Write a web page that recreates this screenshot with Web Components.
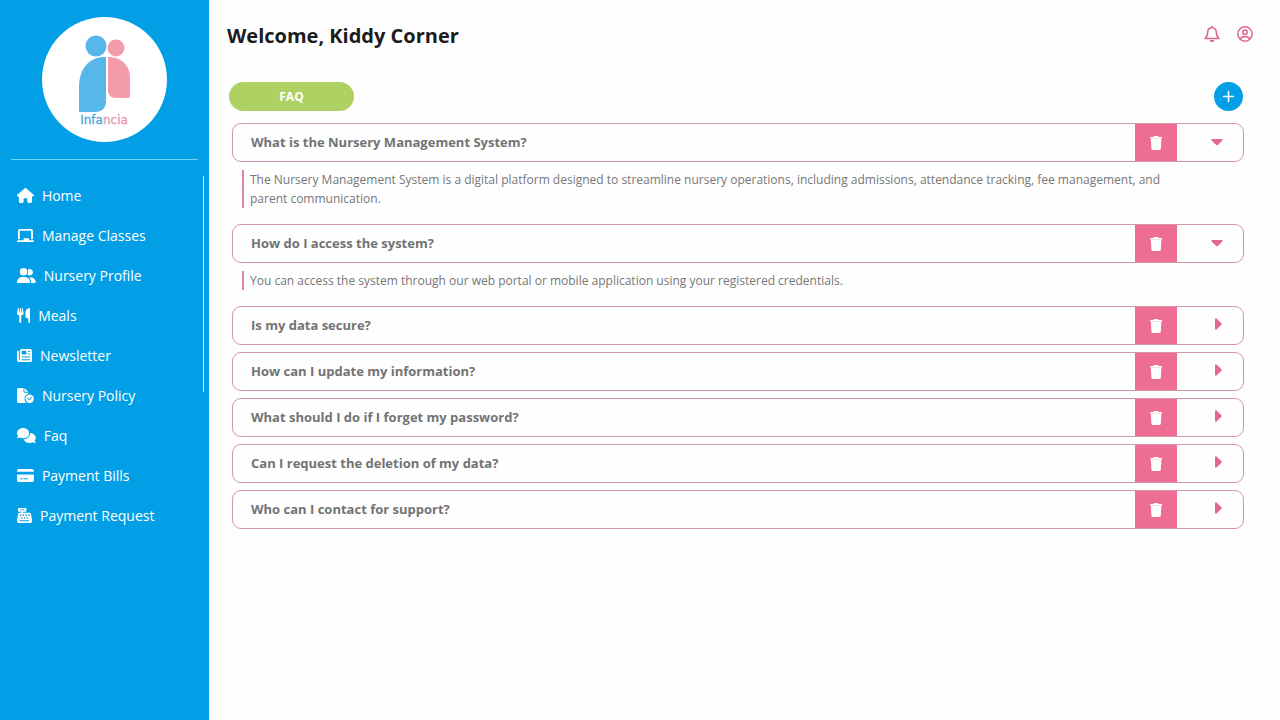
<!DOCTYPE html>
<html lang="en">
<head>
<meta charset="utf-8">
<meta name="viewport" content="width=device-width, initial-scale=1">
<title>Infancia - FAQ</title>
<style>
  html, body {
    margin: 0;
    min-height: 100%;
  }

  body {
    font-family: "Open Sans", "Noto Sans", sans-serif;
    background: #fefefe;
    color: #1c1c1c;
  }
</style>
</head>
<body>
<infancia-app>
  <infancia-sidebar slot="sidebar">
    <nav-link icon="house" href="#home">Home</nav-link>
    <nav-link icon="board" href="#classes">Manage Classes</nav-link>
    <nav-link icon="users" href="#profile">Nursery Profile</nav-link>
    <nav-link icon="utensils" href="#meals">Meals</nav-link>
    <nav-link icon="newspaper" href="#newsletter">Newsletter</nav-link>
    <nav-link icon="policy" href="#policy">Nursery Policy</nav-link>
    <nav-link icon="comments" href="#faq">Faq</nav-link>
    <nav-link icon="card" href="#bills">Payment Bills</nav-link>
    <nav-link icon="register" href="#request">Payment Request</nav-link>
  </infancia-sidebar>
  <page-header>Welcome, Kiddy Corner</page-header>
  <faq-list heading="FAQ">
    <faq-item open question="What is the Nursery Management System?">The Nursery Management System is a digital platform designed to streamline nursery operations, including admissions, attendance tracking, fee management, and parent communication.</faq-item>
    <faq-item open question="How do I access the system?">You can access the system through our web portal or mobile application using your registered credentials.</faq-item>
    <faq-item question="Is my data secure?"></faq-item>
    <faq-item question="How can I update my information?"></faq-item>
    <faq-item question="What should I do if I forget my password?"></faq-item>
    <faq-item question="Can I request the deletion of my data?"></faq-item>
    <faq-item question="Who can I contact for support?"></faq-item>
  </faq-list>
</infancia-app>

<script>
"use strict";

(() => {
  // name: [viewBox width, viewBox height, markup]
  const ICONS = {
    house: [576, 512, `<path d="M575.8 255.5c0 18-15 32.1-32 32.1l-32 0 .7 160.2c0 2.7-.2 5.4-.5 8.1l0 16.2c0 22.1-17.9 40-40 40l-80 0c-22.1 0-40-17.9-40-40l0-88c0-17.7-14.3-32-32-32l-64 0c-17.7 0-32 14.3-32 32l0 88c0 22.1-17.9 40-40 40l-80 0c-22.1 0-40-17.9-40-40l0-184.500-31.300 0c-18 0-32-14-32-32.1c0-9 3-17 10-24L266.4 8c7-7 15-8 22-8s15 2 21 7L564.8 231.5c8 7 12 15 11 24z"/>`],
    board: [576, 512, `<path d="M96 32C60.7 32 32 60.700 32 96l0 288 64 0L96 96l384 0 0 288 64 0 0-288c0-35.3-28.7-64-64-64L96 32zM224 384l0 32L32 416c-17.7 0-32 14.3-32 32s14.3 32 32 32l512 0c17.7 0 32-14.3 32-32s-14.3-32-32-32l-128 0 0-32c0-17.7-14.3-32-32-32l-128 0c-17.7 0-32 14.3-32 32z"/>`],
    users: [640, 512, `<path d="M96 128a128 128 0 1 1 256 0A128 128 0 1 1 96 128zM0 482.3C0 383.8 79.8 304 178.3 304l91.4 0C368.2 304 448 383.8 448 482.3c0 16.4-13.3 29.7-29.7 29.7L29.7 512C13.3 512 0 498.7 0 482.3zM609.3 512l-137.800 0c5.4-9.4 8.6-20.3 8.6-32l0-8c0-60.7-27.1-115.2-69.8-151.8c2.4-.1 4.7-.2 7.1-.2l61.4 0C567.8 320 640 392.2 640 481.3c0 17-13.8 30.7-30.7 30.7zM432 256c-31 0-59-12.600-79.300-32.9C372.4 196.5 384 163.6 384 128c0-26.8-6.6-52.1-18.3-74.3C384.3 40.1 407.2 32 432 32c61.9 0 112 50.1 112 112s-50.1 112-112 112z"/>`],
    utensils: [448, 512, `<path d="M416 0C400 0 288 32 288 176l0 112c0 35.3 28.7 64 64 64l32 0 0 128c0 17.7 14.3 32 32 32s32-14.3 32-32L448 32c0-17.7-14.3-32-32-32zM64 16C64 7.8 57.9 1 49.7 .1S34.2 4.6 32.4 12.5L2.1 148.8C.7 155.1 0 161.5 0 167.9c0 45.9 35.1 83.6 80 87.7L80 480c0 17.7 14.3 32 32 32s32-14.3 32-32l0-224.4c44.9-4.1 80-41.8 80-87.7c0-6.400-.7-12.800-2.1-19.1L191.6 12.5c-1.8-8-9.3-13.3-17.4-12.4S160 7.8 160 16l0 134.2c0 5.4-4.4 9.8-9.8 9.8c-5.1 0-9.3-3.9-9.8-9L127.9 14.6C127.2 6.3 120.3 0 112 0s-15.2 6.3-15.9 14.6L83.7 151c-.5 5.1-4.7 9-9.8 9c-5.4 0-9.8-4.4-9.8-9.8L64 16z"/>`],
    newspaper: [512, 512, `<path fill-rule="evenodd" d="M96 96c0-35.3 28.7-64 64-64l288 0c35.3 0 64 28.7 64 64l0 320c0 35.3-28.7 64-64 64L80 480c-44.2 0-80-35.8-80-80L0 128c0-17.7 14.3-32 32-32s32 14.3 32 32l0 272c0 8.8 7.2 16 16 16s16-7.2 16-16L96 96zm64 24l0 80c0 13.3 10.7 24 24 24l112 0c13.3 0 24-10.7 24-24l0-80c0-13.3-10.7-24-24-24L184 96c-13.3 0-24 10.7-24 24zM368 96h80v32h-80zM368 192h80v32h-80zM160 288h288v32H160zM160 384h288v32H160z"/>`],
    policy: [576, 512, `<path d="M0 64C0 28.7 28.7 0 64 0l160 0 0 128c0 17.7 14.3 32 32 32l128 0 0 38.6C310 219 256 287 256 368c0 59 29 111 73 144L64 512c-35.300 0-64-28.700-64-64zM256 0l128 128H256z"/><path fill-rule="evenodd" d="M432 224a144 144 0 1 1 0 288 144 144 0 1 1 0-288zm79 101-23-23-72 72-40-40-23 23 63 63z"/>`],
    comments: [640, 512, `<path d="M208 352c114.9 0 208-78.8 208-176S322.9 0 208 0S0 78.8 0 176c0 38.6 14.7 74.3 39.6 103.4c-4 12-12 25-22 36-8 9-17 14-17 24 0 7 6 13 14 13 32 0 61-13 85-26C132 343 169 352 208 352zM448 176c0 112-99 199-223 208C252 456 334 512 432 512c38 0 74-9 105-24 25 14 55 24 87 24 15 0 22-15 12-26-15-15-30-34-36-52C625 406 640 370 640 332c0-85-82-156-192-156z"/>`],
    card: [576, 512, `<path fill-rule="evenodd" d="M64 32h448a64 64 0 0 1 64 64v32H0V96a64 64 0 0 1 64-64zM0 224h576v192a64 64 0 0 1-64 64H64a64 64 0 0 1-64-64zm112 128v32h80v-32zm112 0v32h144v-32z"/>`],
    register: [512, 512, `<path fill-rule="evenodd" d="M64 0h224a32 32 0 0 1 32 32v64a32 32 0 0 1-32 32h-80v32h208c32 0 58 23 63 54l31 194c2 12 2 16 2 40a64 64 0 0 1-64 64H64a64 64 0 0 1-64-64c0-24 0-28 2-40l31-194c5-31 31-54 63-54h48v-32H64a32 32 0 0 1-32-32V32A32 32 0 0 1 64 0zm32 48v32h160V48zM96 224v48h48v-48zm96 0v48h48v-48zm96 0v48h48v-48zm96 0v48h48v-48zM144 312v48h48v-48zm96 0v48h48v-48zm96 0v48h48v-48zM96 416v32h320v-32z"/>`],
    trash: [448, 512, `<path d="M135 18C140 7 151 0 163 0h122c12 0 23 7 28 18l7 14h96c18 0 32 14 32 32s-14 32-32 32H32C14 96 0 82 0 64s14-32 32-32h96zM32 112h384l-21 355c-2 25-23 45-48 45H101c-25 0-46-20-48-45z"/>`],
    bell: [16, 16, `<path fill="none" stroke="currentColor" stroke-width="1.500" stroke-linejoin="round" d="M8 1.700c-2.700 0-4.300 2-4.300 4.600 0 3-.7 4.500-2.700 6.200h14c-2-1.700-2.700-3.200-2.700-6.200C12.300 3.700 10.700 1.700 8 1.700z"/><path d="M7.200 0h1.600v2H7.200zM5.800 14h4.400a2.200 2.200 0 0 1-4.400 0z"/>`],
    account: [16, 16, `<g fill="none" stroke="currentColor" stroke-width="1.500"><circle cx="8" cy="8" r="7.200"/><circle cx="8" cy="6.300" r="2.200"/><path d="M3.300 13.200c.6-1.700 2-2.500 3.700-2.500h2c1.700 0 3.100.8 3.700 2.500"/></g>`],
    plus: [16, 16, `<path fill="none" stroke="currentColor" stroke-width="2" stroke-linecap="round" d="M8 2v12M2 8h12"/>`],
    right: [8, 12, `<path d="M1 1.200C1 .3 2 0 2.600.600l4.800 4.600c.5.500.5 1.100 0 1.600l-4.800 4.600C2 12 1 11.700 1 10.800z"/>`],
    down: [12, 8, `<path d="M1.200 1C.3 1 0 2 .600 2.600l4.600 4.300c.5.500 1.100.5 1.600 0l4.600-4.300C12 2 11.700 1 10.800 1z"/>`]
  };

  customElements.define("app-icon", class extends HTMLElement {
    static get observedAttributes() {
      return ["name"];
    }

    constructor() {
      super();

      this.attachShadow({mode: "open"}).innerHTML = `
      <style>
        :host {
          display: inline-flex;
          flex: none;
          height: 15px;
        }

        svg {
          display: block;
          height: 100%;
          fill: currentColor;
        }
      </style>
      <svg aria-hidden="true"></svg>
      `;
    }

    attributeChangedCallback(name, oldVal, newVal) {
      const [width, height, markup] = ICONS[newVal];
      const svg = this.shadowRoot.querySelector("svg");
      svg.setAttribute("viewBox", `0 0 ${width} ${height}`);
      svg.innerHTML = markup;
    }
  });

  customElements.define("infancia-app", class extends HTMLElement {
    constructor() {
      super();

      this.attachShadow({mode: "open"}).innerHTML = `
      <style>
        :host {
          display: grid;
          grid-template-columns: 209px minmax(0, 1fr);
          min-height: 100vh;
        }

        main {
          padding: 16px 27px 24px 18px;
        }
      </style>
      <slot name="sidebar"></slot>
      <main><slot></slot></main>
      `;
    }
  });

  customElements.define("infancia-logo", class extends HTMLElement {
    constructor() {
      super();

      this.attachShadow({mode: "open"}).innerHTML = `
      <style>
        :host {
          display: block;
          width: 125px;
          height: 125px;
          border-radius: 50%;
          background: #fff;
        }

        text {
          font: 12px "DejaVu Sans", sans-serif;
          stroke-width: 0.3px;
        }
      </style>
      <svg viewBox="0 0 125 125" role="img" aria-label="Infancia">
        <circle cx="54" cy="29" r="10.500" fill="#58b7ea"/>
        <circle cx="74" cy="31" r="8.500" fill="#f49bab"/>
        <path fill="#58b7ea" d="M37 95V70C37 51 48 40 62 40H64V84C64 91 60 95 53 95z"/>
        <path fill="#f49bab" d="M66 40C80 40 88 49 88 61V79Q88 81 86 81H74C69 81 66 78 66 73z"/>
        <text x="62" y="107" text-anchor="middle"><tspan fill="#4aa9d8" stroke="#4aa9d8">Infa</tspan><tspan fill="#e59ab0" stroke="#e59ab0">ncia</tspan></text>
      </svg>
      `;
    }
  });

  customElements.define("infancia-sidebar", class extends HTMLElement {
    constructor() {
      super();

      this.attachShadow({mode: "open"}).innerHTML = `
      <style>
        :host {
          display: flex;
          flex-direction: column;
          background: #029fe6;
          color: #fff;
          padding: 17px 5px 0 11px;
        }

        infancia-logo {
          align-self: center;
          margin-right: 6px;
        }

        hr {
          width: calc(100% - 6px);
          height: 1px;
          margin: 17px 0 16px;
          border: 0;
          background: #6fd6f8;
        }

        .scroller {
          display: grid;
          grid-template-columns: 1fr 1px;
          align-items: start;
        }

        .thumb {
          height: 216px;
          background: #d5f4ff;
        }
      </style>
      <infancia-logo></infancia-logo>
      <hr>
      <div class="scroller">
        <nav><slot></slot></nav>
        <div class="thumb"></div>
      </div>
      `;
    }
  });

  customElements.define("nav-link", class extends HTMLElement {
    constructor() {
      super();

      this.attachShadow({mode: "open"}).innerHTML = `
      <style>
        :host {
          display: block;
        }

        a {
          display: flex;
          align-items: center;
          gap: 8px;
          box-sizing: border-box;
          height: 40px;
          padding: 0 0 2px 6px;
          color: inherit;
          font-size: 14px;
          text-decoration: none;
          white-space: nowrap;
        }
      </style>
      <a><app-icon></app-icon><span><slot></slot></span></a>
      `;
    }

    connectedCallback() {
      this.shadowRoot.querySelector("a").href = this.getAttribute("href");
      this.shadowRoot.querySelector("app-icon").setAttribute("name", this.getAttribute("icon"));
    }
  });

  customElements.define("page-header", class extends HTMLElement {
    constructor() {
      super();

      this.attachShadow({mode: "open"}).innerHTML = `
      <style>
        :host {
          display: flex;
          justify-content: space-between;
          height: 40px;
        }

        h1 {
          margin: 0;
          font-size: 20px;
          line-height: 40px;
        }

        .actions {
          display: flex;
          align-items: center;
          gap: 17px;
          height: 35px;
        }

        button {
          display: flex;
          padding: 0;
          border: 0;
          background: none;
          color: #df6688;
          cursor: pointer;
        }

        app-icon {
          height: 16px;
        }
      </style>
      <h1><slot></slot></h1>
      <div class="actions">
        <button type="button" aria-label="Notifications"><app-icon name="bell"></app-icon></button>
        <button type="button" aria-label="Account"><app-icon name="account"></app-icon></button>
      </div>
      `;
    }
  });

  customElements.define("faq-list", class extends HTMLElement {
    constructor() {
      super();

      this.attachShadow({mode: "open"}).innerHTML = `
      <style>
        :host {
          display: block;
          margin-top: 26px;
          padding: 0 9px 0 2px;
        }

        header {
          display: flex;
          align-items: center;
          justify-content: space-between;
          margin-bottom: 12px;
          padding-right: 1px;
        }

        h2 {
          width: 125px;
          margin: 0;
          border-radius: 15px;
          background: #afd163;
          color: #fff;
          font-size: 12px;
          line-height: 29px;
          text-align: center;
        }

        button {
          display: grid;
          place-items: center;
          width: 29px;
          height: 29px;
          padding: 0;
          border: 0;
          border-radius: 50%;
          background: #029fe6;
          color: #fff;
          cursor: pointer;
        }

        button app-icon {
          height: 13px;
        }

        .items {
          display: flex;
          flex-direction: column;
          gap: 7px;
          padding-left: 3px;
        }
      </style>
      <header>
        <h2></h2>
        <button type="button" aria-label="Add question"><app-icon name="plus"></app-icon></button>
      </header>
      <div class="items"><slot></slot></div>
      `;
    }

    connectedCallback() {
      this.shadowRoot.querySelector("h2").textContent = this.getAttribute("heading");
    }
  });

  customElements.define("faq-item", class extends HTMLElement {
    static get observedAttributes() {
      return ["question", "open"];
    }

    constructor() {
      super();

      this.attachShadow({mode: "open"}).innerHTML = `
      <style>
        :host {
          display: block;
        }

        .row {
          display: grid;
          grid-template-columns: 1fr 42px 66px;
          box-sizing: border-box;
          height: 39px;
          border: 1px solid #d795ac;
          border-radius: 9px;
          overflow: hidden;
        }

        h3 {
          margin: 0;
          padding-left: 18px;
          color: #737373;
          font-size: 13px;
          line-height: 37px;
        }

        button {
          display: grid;
          place-items: center;
          padding: 0;
          border: 0;
          background: none;
          color: #e0698e;
          cursor: pointer;
        }

        .delete {
          background: #ed6d93;
          color: #fff;
        }

        .delete app-icon {
          height: 14px;
        }

        .toggle {
          padding: 0 0 4px 16px;
        }

        .toggle app-icon {
          height: 12px;
        }

        :host([open]) .toggle {
          padding: 0 0 2px 14px;
        }

        :host([open]) .toggle app-icon {
          height: 8px;
        }

        .answer {
          display: none;
          margin: 8px 36px 9px 10px;
          padding: 0 48px 0 6px;
          border-left: 2px solid #dc86a4;
          color: #777;
          font-size: 12px;
          line-height: 19px;
        }

        :host([open]) .answer {
          display: block;
        }
      </style>
      <div class="row">
        <h3 id="question"></h3>
        <button class="delete" type="button" aria-label="Delete question"><app-icon name="trash"></app-icon></button>
        <button class="toggle" type="button" aria-labelledby="question"><app-icon name="right"></app-icon></button>
      </div>
      <div class="answer"><slot></slot></div>
      `;

      this.toggleElem = this.shadowRoot.querySelector(".toggle");
      this.toggleElem.addEventListener("click", () => this.toggleAttribute("open"));
    }

    attributeChangedCallback(name, oldVal, newVal) {
      switch (name) {
        case "question":
          this.shadowRoot.getElementById("question").textContent = newVal;
          break;
        case "open":
          this.toggleElem.setAttribute("aria-expanded", newVal !== null);
          this.toggleElem.firstElementChild.setAttribute("name", newVal === null ? "right" : "down");
          break;
      }
    }
  });
})();
</script>
</body>
</html>
